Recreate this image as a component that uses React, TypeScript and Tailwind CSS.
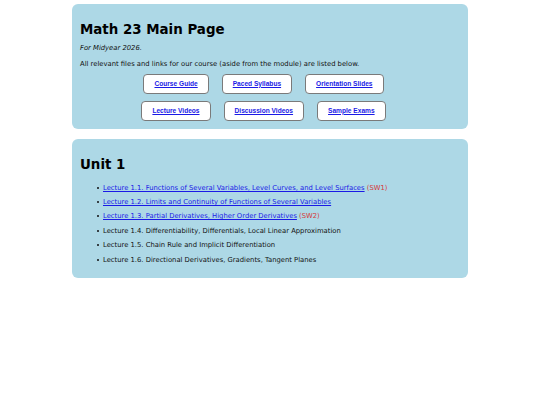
const buttonsTop = ["Course Guide", "Paced Syllabus", "Orientation Slides"];
const buttonsBottom = ["Lecture Videos", "Discussion Videos", "Sample Exams"];

const lectures: { title: string; link: boolean; sw?: string }[] = [
  { title: "Lecture 1.1. Functions of Several Variables, Level Curves, and Level Surfaces", link: true, sw: "SW1" },
  { title: "Lecture 1.2. Limits and Continuity of Functions of Several Variables", link: true },
  { title: "Lecture 1.3. Partial Derivatives, Higher Order Derivatives", link: true, sw: "SW2" },
  { title: "Lecture 1.4. Differentiability, Differentials, Local Linear Approximation", link: false },
  { title: "Lecture 1.5. Chain Rule and Implicit Differentiation", link: false },
  { title: "Lecture 1.6. Directional Derivatives, Gradients, Tangent Planes", link: false },
];

const LinkButton = ({ label }: { label: string }) => (
  <a
    href="#"
    className="mr-[13px] flex h-[20px] items-center rounded-[4px] border border-[#7a7a7a] bg-white px-[10px] text-[6.6px] font-bold text-[#1a1ae6] underline [font-family:'Liberation_Sans',Arial,sans-serif]"
  >
    {label}
  </a>
);

const App = () => {
  return (
    <div className="min-h-[405px] bg-white pt-[4px] text-[#111] [font-family:'DejaVu_Sans',Verdana,sans-serif]">
      <div className="mx-auto flex w-[396px] flex-col gap-[10.5px]">
        <section className="rounded-[6px] bg-[#add8e6] px-[8px] pt-[18px] pb-[8px]">
          <h1 className="text-[13.4px] leading-[16px] font-bold text-black">Math 23 Main Page</h1>
          <p className="mt-[6px] text-[6.8px] leading-[8px] italic">For Midyear 2026.</p>
          <p className="mt-[7.5px] text-[6.8px] leading-[8px]">
            All relevant files and links for our course (aside from the module) are listed below.
          </p>
          <div className="mt-[6px] flex flex-col gap-[7px]">
            <div className="flex justify-center">
              {buttonsTop.map((b) => (
                <LinkButton key={b} label={b} />
              ))}
            </div>
            <div className="flex justify-center">
              {buttonsBottom.map((b) => (
                <LinkButton key={b} label={b} />
              ))}
            </div>
          </div>
        </section>

        <section className="rounded-[6px] bg-[#add8e6] px-[8px] pt-[18px] pb-[14px]">
          <h2 className="text-[13.4px] leading-[16px] font-bold text-black">Unit 1</h2>
          <ul className="mt-[10.7px] flex flex-col gap-[6.4px] pl-[17px] text-[6.8px] leading-[8px]">
            {lectures.map((l) => (
              <li key={l.title} className="flex items-center">
                <span className="mr-[4px] h-[2px] w-[2px] shrink-0 rounded-full bg-[#111]" />
                <span>
                  {l.link ? (
                    <a href="#" className="text-[#1a1ae6] underline">
                      {l.title}
                    </a>
                  ) : (
                    l.title
                  )}
                  {l.sw && <span className="text-[#d63a3a]"> ({l.sw})</span>}
                </span>
              </li>
            ))}
          </ul>
        </section>
      </div>
    </div>
  );
};

export default App;
